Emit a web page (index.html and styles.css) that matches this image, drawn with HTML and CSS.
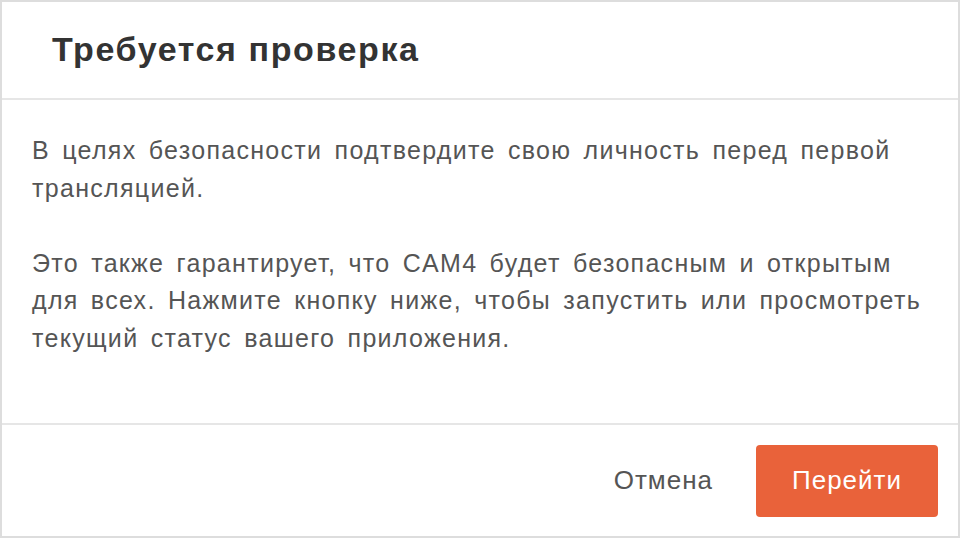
FILE: index.html
```html
<!DOCTYPE html>
<html lang="ru">
<head>
<meta charset="utf-8">
<title>Требуется проверка</title>
<link rel="stylesheet" href="styles.css">
</head>
<body>
<div class="modal">
  <header class="modal-header">
    <h1 class="modal-title">Требуется проверка</h1>
  </header>
  <main class="modal-body">
    <p>В целях безопасности подтвердите свою личность перед первой трансляцией.</p>
    <p>Это также гарантирует, что CAM4 будет безопасным и открытым для всех. Нажмите кнопку ниже, чтобы запустить или просмотреть текущий статус вашего приложения.</p>
  </main>
  <footer class="modal-footer">
    <button class="btn-cancel" type="button">Отмена</button>
    <button class="btn-primary" type="button">Перейти</button>
  </footer>
</div>
</body>
</html>
```

FILE: styles.css
```css
* { box-sizing: border-box; }
html, body { margin: 0; padding: 0; background: #fff; }
body { font-family: "Liberation Sans", Arial, Helvetica, sans-serif; }

.modal {
  width: 960px;
  height: 538px;
  border: 2px solid #dddddd;
  display: flex;
  flex-direction: column;
  background: #fff;
}

.modal-header {
  height: 98px;
  border-bottom: 2px solid #e6e6e6;
  display: flex;
  align-items: center;
  padding: 0 0 0 50px;
}

.modal-title {
  margin: 0;
  font-size: 34px;
  letter-spacing: 1.6px;
  font-weight: bold;
  color: #333333;
  line-height: 1;
  padding-bottom: 2px;
}

.modal-body {
  flex: 1;
  padding: 32px 36px 0 30px;
  color: #555555;
  font-size: 25px;
  letter-spacing: 1.3px;
  word-spacing: 4px;
  line-height: 37.5px;
}

.modal-body p {
  margin: 0 0 37.5px 0;
}

.modal-footer {
  height: 113px;
  border-top: 2px solid #e6e6e6;
  display: flex;
  justify-content: flex-end;
  align-items: center;
  padding-right: 20px;
}

.btn-cancel {
  border: none;
  background: none;
  padding: 0;
  margin-right: 43px;
  font-family: inherit;
  font-size: 26px;
  letter-spacing: 1px;
  color: #555555;
  cursor: pointer;
}

.btn-primary {
  width: 182px;
  height: 72px;
  border: none;
  border-radius: 4px;
  background: #e9623a;
  color: #ffffff;
  font-family: inherit;
  font-size: 26px;
  letter-spacing: 1px;
  cursor: pointer;
}
```
